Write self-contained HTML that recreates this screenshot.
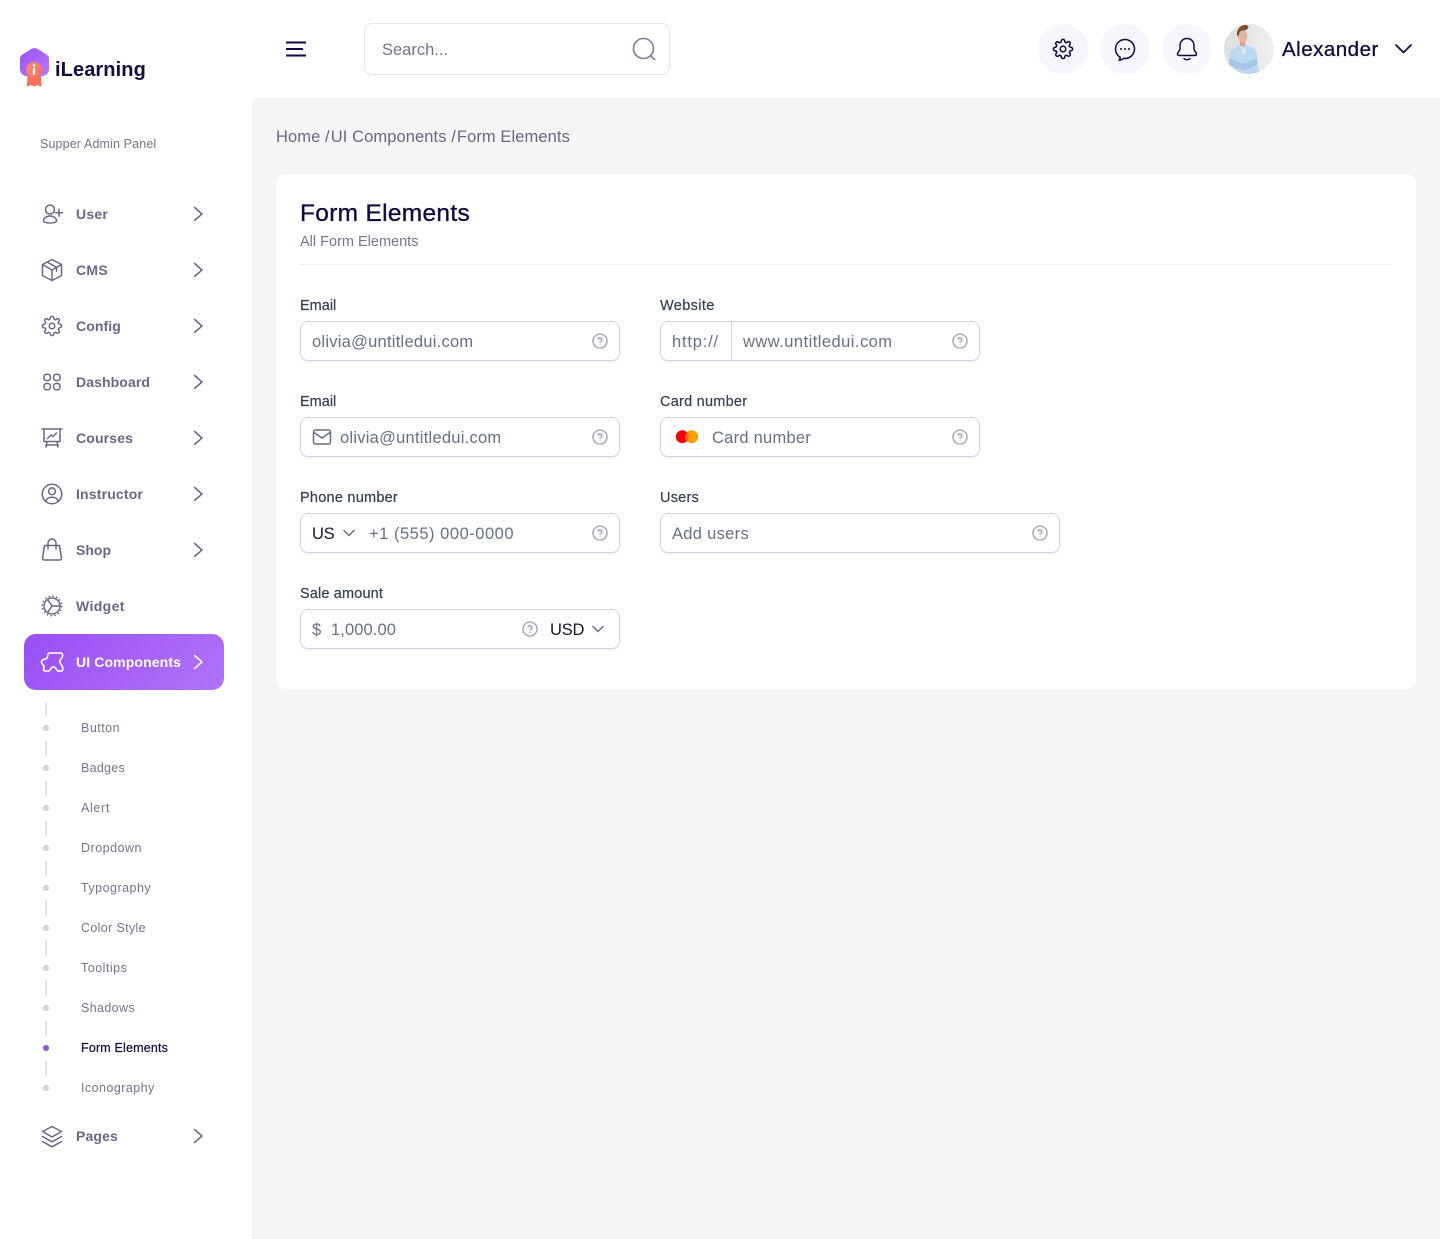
<!DOCTYPE html>
<html lang="en"><head><meta charset="utf-8"><title>Form Elements</title>
<style>
*{box-sizing:border-box}
html,body{margin:0;padding:0}
body{width:1440px;height:1239px;position:relative;overflow:hidden;background:#fff;font-family:"Liberation Sans",sans-serif}
.bg{position:absolute;left:252px;top:98px;width:1188px;height:1141px;background:#f5f5f6}
.card{position:absolute;left:276px;top:174px;width:1140px;height:515px;background:#fff;border-radius:10px}
.div{position:absolute;left:300px;top:264px;width:1092px;height:1px;background:#f0f0f3}
.search{position:absolute;left:364px;top:23px;width:306px;height:52px;border:1px solid #e6e6ee;border-radius:8px;background:#fff}
.circ{position:absolute;top:24px;width:50px;height:50px;border-radius:50%;background:#f8f5fe}
.in{position:absolute;height:40px;border:1px solid #d0d1e0;border-radius:8px;background:#fff;box-shadow:0 1px 2px rgba(16,24,40,.05)}
.active{position:absolute;left:24px;top:634px;width:200px;height:56px;border-radius:12px;background:linear-gradient(135deg,#994ff5,#b173f8)}
.t{position:absolute;white-space:nowrap;height:20px;line-height:20px}
.n{left:76px;font-size:14px;font-weight:700;color:#6b6688}
.s{left:81px;font-size:12.5px;color:#77738f}
.l{font-size:14.5px;color:#344054;-webkit-text-stroke:.2px #344054}
.p{font-size:16.5px;color:#667085}
.d{font-size:16.5px;color:#101828}
.line{position:absolute;left:45px;width:2px;background:#e6e5ee}
.dot{position:absolute;left:43px;width:6px;height:6px;border-radius:50%;background:#d1d0dd}
svg.o{position:absolute;left:0;top:0}
</style></head><body>
<div class="bg"></div>
<div class="card"></div>
<div class="div"></div>
<div class="search"></div>
<div class="circ" style="left:1038px"></div>
<div class="circ" style="left:1100px"></div>
<div class="circ" style="left:1162px"></div>
<div class="active"></div>

<div class="t" style="left:55px;top:60px;font-size:20px;font-weight:700;color:#120a42;letter-spacing:.1px">iLearning</div>
<div class="t" style="left:40px;top:134px;font-size:12.5px;color:#77738f;letter-spacing:.13px">Supper Admin Panel</div>

<div class="t n" style="top:204px;letter-spacing:.25px">User</div>
<div class="t n" style="top:260px;letter-spacing:.3px">CMS</div>
<div class="t n" style="top:316px;letter-spacing:.1px">Config</div>
<div class="t n" style="top:372px;letter-spacing:.1px">Dashboard</div>
<div class="t n" style="top:428px;letter-spacing:.15px">Courses</div>
<div class="t n" style="top:484px;letter-spacing:.17px">Instructor</div>
<div class="t n" style="top:540px">Shop</div>
<div class="t n" style="top:596px;letter-spacing:.38px">Widget</div>
<div class="t n" style="top:652px;letter-spacing:.12px;color:#fff">UI Components</div>
<div class="t n" style="top:1126px;letter-spacing:.15px">Pages</div>

<div class="line" style="top:702px;height:14px"></div><div class="dot" style="top:725px"></div>
<div class="line" style="top:741px;height:15px"></div><div class="dot" style="top:765px"></div>
<div class="line" style="top:781px;height:15px"></div><div class="dot" style="top:805px"></div>
<div class="line" style="top:821px;height:15px"></div><div class="dot" style="top:845px"></div>
<div class="line" style="top:861px;height:15px"></div><div class="dot" style="top:885px"></div>
<div class="line" style="top:900px;height:16px"></div><div class="dot" style="top:925px"></div>
<div class="line" style="top:940px;height:16px"></div><div class="dot" style="top:965px"></div>
<div class="line" style="top:980px;height:16px"></div><div class="dot" style="top:1005px"></div>
<div class="line" style="top:1021px;height:15px"></div><div class="dot" style="top:1045px;background:#8a56dc"></div>
<div class="line" style="top:1061px;height:15px"></div><div class="dot" style="top:1085px"></div>

<div class="t s" style="top:718px;letter-spacing:.48px">Button</div>
<div class="t s" style="top:758px;letter-spacing:.27px">Badges</div>
<div class="t s" style="top:798px;letter-spacing:.66px">Alert</div>
<div class="t s" style="top:838px;letter-spacing:.5px">Dropdown</div>
<div class="t s" style="top:878px;letter-spacing:.48px">Typography</div>
<div class="t s" style="top:918px;letter-spacing:.35px">Color Style</div>
<div class="t s" style="top:958px;letter-spacing:.5px">Tooltips</div>
<div class="t s" style="top:998px;letter-spacing:.37px">Shadows</div>
<div class="t s" style="top:1038px;letter-spacing:.18px;color:#120a42;-webkit-text-stroke:.2px #120a42">Form Elements</div>
<div class="t s" style="top:1078px;letter-spacing:.45px">Iconography</div>

<div class="t" style="left:382px;top:40px;font-size:16.5px;color:#77738f">Search...</div>
<div class="t" style="left:1282px;top:39.500px;font-size:20.5px;letter-spacing:.5px;color:#120a42;-webkit-text-stroke:.3px #120a42">Alexander</div>

<div class="t" style="left:276px;top:127px;font-size:16.5px;letter-spacing:.09px;color:#6b6688">Home /<span style="margin-left:1px">UI Components</span> /<span style="margin-left:1px">Form Elements</span></div>
<div class="t" style="left:300px;top:204px;font-size:24.5px;letter-spacing:.3px;color:#120a42;-webkit-text-stroke:.35px #120a42">Form Elements</div>
<div class="t" style="left:300px;top:232px;font-size:14.5px;color:#77738f">All Form Elements</div>

<div class="t l" style="left:300px;top:296px">Email</div>
<div class="in" style="left:300px;top:321px;width:320px"></div>
<div class="t p" style="left:312px;top:332px;letter-spacing:.25px">olivia@untitledui.com</div>

<div class="t l" style="left:660px;top:296px;letter-spacing:.37px">Website</div>
<div class="in" style="left:660px;top:321px;width:320px"></div>
<div style="position:absolute;left:731px;top:322px;width:1px;height:38px;background:#d0d1e0"></div>
<div class="t p" style="left:672px;top:332px;letter-spacing:.8px">http://</div>
<div class="t p" style="left:743px;top:332px;letter-spacing:.46px">www.untitledui.com</div>

<div class="t l" style="left:300px;top:392px">Email</div>
<div class="in" style="left:300px;top:417px;width:320px"></div>
<div class="t p" style="left:340px;top:428px;letter-spacing:.25px">olivia@untitledui.com</div>

<div class="t l" style="left:660px;top:392px;letter-spacing:.24px">Card number</div>
<div class="in" style="left:660px;top:417px;width:320px"></div>
<div style="position:absolute;left:670px;top:425px;width:34px;height:24px;border:1px solid #f2f4f7;border-radius:4px;background:#fff"></div>
<div class="t p" style="left:712px;top:428px;letter-spacing:.25px">Card number</div>

<div class="t l" style="left:300px;top:488px;letter-spacing:.24px">Phone number</div>
<div class="in" style="left:300px;top:513px;width:320px"></div>
<div class="t d" style="left:312px;top:524px;letter-spacing:-.2px">US</div>
<div class="t p" style="left:369px;top:524px;letter-spacing:.52px">+1 (555) 000-0000</div>

<div class="t l" style="left:660px;top:488px;letter-spacing:.22px">Users</div>
<div class="in" style="left:660px;top:513px;width:400px"></div>
<div class="t p" style="left:672px;top:524px;letter-spacing:.3px">Add users</div>

<div class="t l" style="left:300px;top:584px;letter-spacing:.15px">Sale amount</div>
<div class="in" style="left:300px;top:609px;width:320px"></div>
<div class="t p" style="left:312px;top:620px">$</div>
<div class="t p" style="left:331px;top:620px;letter-spacing:.1px">1,000.00</div>
<div class="t d" style="left:550px;top:620px;letter-spacing:-.2px">USD</div>

<svg class="o" width="1440" height="1239" viewBox="0 0 1440 1239" fill="none" stroke-linecap="round" stroke-linejoin="round">
<defs>
<linearGradient id="lg" x1="0" y1="0" x2="1" y2="1"><stop offset="0" stop-color="#9a50f5"/><stop offset="1" stop-color="#b878f9"/></linearGradient>
<linearGradient id="og" x1="0" y1="0" x2="1" y2="1"><stop offset="0" stop-color="#fb8f74"/><stop offset="1" stop-color="#fa6f60"/></linearGradient>
<linearGradient id="ag" x1="0" y1="0" x2="1" y2="0"><stop offset="0" stop-color="#dedede"/><stop offset="1" stop-color="#efefef"/></linearGradient>
<clipPath id="av"><circle cx="1249" cy="49" r="25"/></clipPath>
<symbol id="help" viewBox="0 0 16 16" overflow="visible">
<circle cx="8" cy="8" r="7" stroke="#98a2b3" stroke-width="1.35" fill="none"/>
<path d="M6 6.1a2 2 0 0 1 3.9.7c0 1.3-1.9 1.9-1.9 1.9M8 11.2h.01" stroke="#98a2b3" stroke-width="1.35" fill="none" stroke-linecap="round"/>
</symbol>
<symbol id="gear" viewBox="0 0 24 24" overflow="visible">
<circle cx="12" cy="12" r="3.2" fill="none" stroke="currentColor"/>
<path fill="none" stroke="currentColor" d="M19.4 15a1.65 1.65 0 0 0 .33 1.82l.06.06a2 2 0 0 1 0 2.83 2 2 0 0 1-2.83 0l-.06-.06a1.65 1.65 0 0 0-1.82-.33 1.65 1.65 0 0 0-1 1.51V21a2 2 0 0 1-2 2 2 2 0 0 1-2-2v-.09A1.65 1.65 0 0 0 9 19.4a1.65 1.65 0 0 0-1.82.33l-.06.06a2 2 0 0 1-2.83 0 2 2 0 0 1 0-2.83l.06-.06a1.65 1.65 0 0 0 .33-1.82 1.65 1.65 0 0 0-1.51-1H3a2 2 0 0 1-2-2 2 2 0 0 1 2-2h.09A1.65 1.65 0 0 0 4.6 9a1.65 1.65 0 0 0-.33-1.82l-.06-.06a2 2 0 0 1 0-2.83 2 2 0 0 1 2.83 0l.06.06a1.65 1.65 0 0 0 1.82.33H9a1.65 1.65 0 0 0 1-1.51V3a2 2 0 0 1 2-2 2 2 0 0 1 2 2v.09a1.65 1.65 0 0 0 1 1.51 1.65 1.65 0 0 0 1.82-.33l.06-.06a2 2 0 0 1 2.83 0 2 2 0 0 1 0 2.83l-.06.06a1.65 1.65 0 0 0-.33 1.82V9a1.65 1.65 0 0 0 1.51 1H21a2 2 0 0 1 2 2 2 2 0 0 1-2 2h-.09a1.65 1.65 0 0 0-1.51 1z"/>
</symbol>
</defs>

<!-- logo -->
<path d="M30.500 49.500 22.500 54.500C20.800 55.600 20 57 20 59V69C20 73 23 76 27 76H42C46 76 49 73 49 69V59C49 57 48.200 55.600 46.500 54.500L38.500 49.500C36 47.600 33 47.600 30.500 49.500z" fill="url(#lg)"/>
<path d="M27.500 76h13.500l.5 9.500c0 1-.8 1.200-1.500.8l-2.500-1.300-3.300 1.500-3.300-1.500-2.500 1.300c-.7.400-1.500.2-1.500-.8z" fill="#fb6f5c"/>
<circle cx="34" cy="70" r="8" fill="url(#og)"/>
<circle cx="34" cy="65.300" r="1.300" fill="#fff"/>
<rect x="32.900" y="67.800" width="2.200" height="7.200" rx="1.100" fill="#fff"/>

<!-- hamburger -->
<path d="M286 42.500h20M286 49h17M286 55.500h20" stroke="#120a42" stroke-width="2" stroke-linecap="butt"/>
<!-- search -->
<circle cx="643.500" cy="48.500" r="10" stroke="#7d7a9c" stroke-width="1.600"/>
<path d="M651 56l3.500 3.500" stroke="#7d7a9c" stroke-width="1.600"/>

<!-- top icons -->
<use href="#gear" x="1052.500" y="38.500" width="21" height="21" color="#120a42" stroke-width="1.750"/>
<path d="M1125 39.500a9.500 9.500 0 0 1 0 19l-1.500-.1c-1.300 1.300-2.700 1.800-4.300 1.900.7-1 1-1.900 1-3.100a9.500 9.500 0 0 1 4.800-17.700z" stroke="#120a42" stroke-width="1.500"/>
<path d="M1121 49h.01M1125 49h.01M1129 49h.01" stroke="#120a42" stroke-width="2"/>
<path d="M1187 38.500c-4.500 0-7 3.500-7 7.500v3c0 2-2.500 3-2.500 5 0 1 1 1.500 2 1.500h15c1 0 2-.5 2-1.500 0-2-2.500-3-2.500-5v-3c0-4-2.500-7.500-7-7.500z" stroke="#120a42" stroke-width="1.500"/>
<path d="M1184 58.700c1.500 1.300 4.500 1.300 6 0" stroke="#120a42" stroke-width="1.500"/>

<!-- avatar -->
<g clip-path="url(#av)">
<rect x="1224" y="24" width="50" height="50" fill="url(#ag)"/>
<path d="M1228 76L1229.500 55Q1230 49 1236 47L1241 44.500H1246L1251 47Q1256 49 1257 55L1259 76z" fill="#bdd7f0"/>
<path d="M1229 58.500c4.500 1 9.500 3.500 14 5 4.500-1 9.500-3.500 14-5l1 5c-4 3-9 5.500-14 7-5-1.500-10.500-3.500-15.500-6.500z" fill="#a6c6e6"/>
<path d="M1240.500 45l3 4.500 3-4.500-1 9h-4z" fill="#d8e8f7"/>
<rect x="1240" y="39" width="5.500" height="7" fill="#d2a58c"/>
<ellipse cx="1242.700" cy="36.500" rx="4.800" ry="6.500" fill="#e3b59c"/>
<path d="M1237 36c-.8-6 2.500-10.500 7.500-11 2-.2 3.800.5 4 2-.5 2-2.500 3.500-5 3.500-2.500 0-3.800 1-4 2.500-.2 1.500-1.200 3-2.500 3z" fill="#7a5234"/>
</g>
<path d="M1396 45l7.500 7.500 7.500-7.500" stroke="#120a42" stroke-width="1.700"/>

<!-- nav icons -->
<g stroke="#6b6688" stroke-width="1.500">
<circle cx="50" cy="209.500" r="4.500"/>
<path d="M43.500 220.800c0-2.800 3-4.800 6.500-4.800s6.500 2 6.500 4.800c0 1.600-2 2.200-6.500 2.200s-6.500-.6-6.500-2.200z"/>
<path d="M59 209.200v7M55.500 212.700h7"/>

<path d="M52 259.500l9.500 5v11l-9.500 5-9.500-5v-11zM42.500 264.500l9.500 5.500 9.500-5.500M52 270v10.500M47 262l9.500 5.300v4"/>

<use href="#gear" x="41.500" y="315.500" width="21" height="21" color="#6b6688" stroke-width="1.700"/>

<rect x="44" y="374.200" width="6.400" height="6.400" rx="2.600"/><rect x="53.600" y="374.200" width="6.400" height="6.400" rx="2.600"/>
<rect x="44" y="383.500" width="6.400" height="6.400" rx="2.600"/><rect x="53.600" y="383.500" width="6.400" height="6.400" rx="2.600"/>

<path d="M42 429h20M44 429v12.500h16V429M47 441.500l-1 5.500M57 441.500l1 5.500M46 445h12M47.500 438.500l3.500-3.500 2 1.500 3.500-3.500"/>

<circle cx="52" cy="494" r="9.700"/><circle cx="52" cy="491.300" r="3.400"/>
<path d="M45.500 501.500c.8-3 3-4.300 6.500-4.300s5.700 1.300 6.500 4.300"/>

<path d="M44.500 545.500h15l2 13c.1 1-.5 1.500-1.500 1.500H44c-1 0-1.600-.5-1.500-1.500zM48 549v-6a4 4 0 0 1 8 0v6"/>

<circle cx="52" cy="606" r="8"/>
<circle cx="52" cy="606" r="9.800" stroke-width="1.500" stroke-dasharray="1.500 2.350" stroke-linecap="butt"/>
<path d="M47.500 599.500l4.500 6.500h8M52 606l-4.500 6.500"/>

<path d="M52 1126.500l9.500 5-9.500 5.500-9.500-5.500zM42.500 1136.500l9.500 5.300 9.500-5.300M42.500 1141.500l9.500 5.300 9.500-5.300"/>

<path d="M194.500 207.500l7.500 6.500-7.500 6.500M194.500 263.500l7.500 6.500-7.500 6.500M194.500 319.500l7.500 6.500-7.500 6.500M194.500 375.500l7.500 6.500-7.500 6.500M194.500 431.500l7.500 6.500-7.500 6.500M194.500 487.500l7.500 6.500-7.500 6.500M194.500 543.500l7.500 6.500-7.500 6.500M194.500 1129.500l7.500 6.500-7.500 6.500"/>
</g>
<path d="M49.500 653H60.500C62 653 62.700 654 62.700 655.500C62.700 658 59.800 659 59.800 661.500C59.800 664 62.700 665 62.700 668V669.500C62.700 670.500 62 671 61 671H58C56.500 671 56.500 667 53.500 667C50.500 667 50.500 671 48.500 671H45C43.700 671 43.300 670 43.600 669C44 667.500 44.500 666.500 43.500 665.500C42.500 664.500 41.500 663.500 41.500 661.800C41.500 660 43.500 659.500 45.500 659C47.500 658.500 47.500 657 47.700 655.500C47.900 654 48.300 653 49.500 653Z" stroke="#fff" stroke-width="1.600"/>
<path d="M194.500 655.500l7.500 6.500-7.500 6.500" stroke="#fff" stroke-width="1.500"/>

<!-- form icons -->
<use href="#help" x="592" y="333" width="16" height="16"/>
<use href="#help" x="952" y="333" width="16" height="16"/>
<use href="#help" x="592" y="429" width="16" height="16"/>
<use href="#help" x="952" y="429" width="16" height="16"/>
<use href="#help" x="592" y="525" width="16" height="16"/>
<use href="#help" x="1032" y="525" width="16" height="16"/>
<use href="#help" x="522" y="621" width="16" height="16"/>

<rect x="313.500" y="430" width="17" height="14" rx="2" stroke="#667085" stroke-width="1.500"/>
<path d="M314 432.500l8 5.500 8-5.500" stroke="#667085" stroke-width="1.500"/>

<circle cx="682.300" cy="436.700" r="6.500" fill="#ed0006"/>
<circle cx="691.700" cy="436.700" r="6.500" fill="#f9a000"/>
<path d="M687 432.200a6.500 6.500 0 0 1 0 9a6.500 6.500 0 0 1 0-9z" fill="#ff5e00"/>

<path d="M344 530.500l5 5 5-5M593 626.500l5 5 5-5" stroke="#667085" stroke-width="1.500"/>
</svg>
</body></html>
